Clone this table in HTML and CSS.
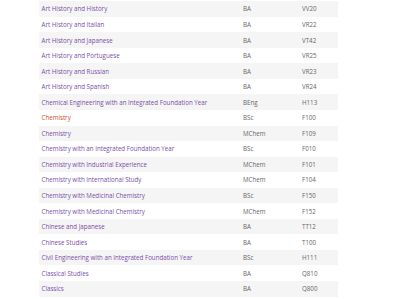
FILE: index.html
```html
<!DOCTYPE html>
<html lang="en">
<head>
<meta charset="utf-8">
<title>Courses</title>
<link rel="stylesheet" href="styles.css">
</head>
<body>
<div class="table">
  <div class="row"><a class="name">Art History and History</a><span class="deg">BA</span><span class="code">VV20</span></div>
  <div class="row"><a class="name">Art History and Italian</a><span class="deg">BA</span><span class="code">VR22</span></div>
  <div class="row"><a class="name">Art History and Japanese</a><span class="deg">BA</span><span class="code">VT42</span></div>
  <div class="row"><a class="name">Art History and Portuguese</a><span class="deg">BA</span><span class="code">VR25</span></div>
  <div class="row"><a class="name">Art History and Russian</a><span class="deg">BA</span><span class="code">VR23</span></div>
  <div class="row"><a class="name">Art History and Spanish</a><span class="deg">BA</span><span class="code">VR24</span></div>
  <div class="row"><a class="name">Chemical Engineering with an Integrated Foundation Year</a><span class="deg">BEng</span><span class="code">H113</span></div>
  <div class="row"><a class="name hot">Chemistry</a><span class="deg">BSc</span><span class="code">F100</span></div>
  <div class="row"><a class="name">Chemistry</a><span class="deg">MChem</span><span class="code">F109</span></div>
  <div class="row"><a class="name">Chemistry with an Integrated Foundation Year</a><span class="deg">BSc</span><span class="code">F010</span></div>
  <div class="row"><a class="name">Chemistry with Industrial Experience</a><span class="deg">MChem</span><span class="code">F101</span></div>
  <div class="row"><a class="name">Chemistry with International Study</a><span class="deg">MChem</span><span class="code">F104</span></div>
  <div class="row"><a class="name">Chemistry with Medicinal Chemistry</a><span class="deg">BSc</span><span class="code">F150</span></div>
  <div class="row"><a class="name">Chemistry with Medicinal Chemistry</a><span class="deg">MChem</span><span class="code">F152</span></div>
  <div class="row"><a class="name">Chinese and Japanese</a><span class="deg">BA</span><span class="code">TT12</span></div>
  <div class="row"><a class="name">Chinese Studies</a><span class="deg">BA</span><span class="code">T100</span></div>
  <div class="row"><a class="name">Civil Engineering with an Integrated Foundation Year</a><span class="deg">BSc</span><span class="code">H111</span></div>
  <div class="row"><a class="name">Classical Studies</a><span class="deg">BA</span><span class="code">Q810</span></div>
  <div class="row"><a class="name">Classics</a><span class="deg">BA</span><span class="code">Q800</span></div>
</div>
</body>
</html>
```
FILE: styles.css
```css
html, body {
  margin: 0;
  padding: 0;
  background: #ffffff;
}
body {
  font-family: "Open Sans", "Liberation Sans", sans-serif;
  font-size: 6.2px;
  overflow: hidden;
}
.table {
  margin-left: 38.5px;
  width: 299.5px;
  padding-top: 1.2px;
}
.row {
  display: grid;
  grid-template-columns: 201.5px 59px 1fr;
  height: 15.56px;
  align-items: center;
}
.row:nth-child(odd) {
  background: #f5f5f5;
}
.name {
  padding-left: 3px;
  color: #7a4ea6;
  white-space: nowrap;
}
.name.hot {
  color: #c8502f;
}
.deg, .code {
  padding-left: 3px;
  color: #666666;
}
```
